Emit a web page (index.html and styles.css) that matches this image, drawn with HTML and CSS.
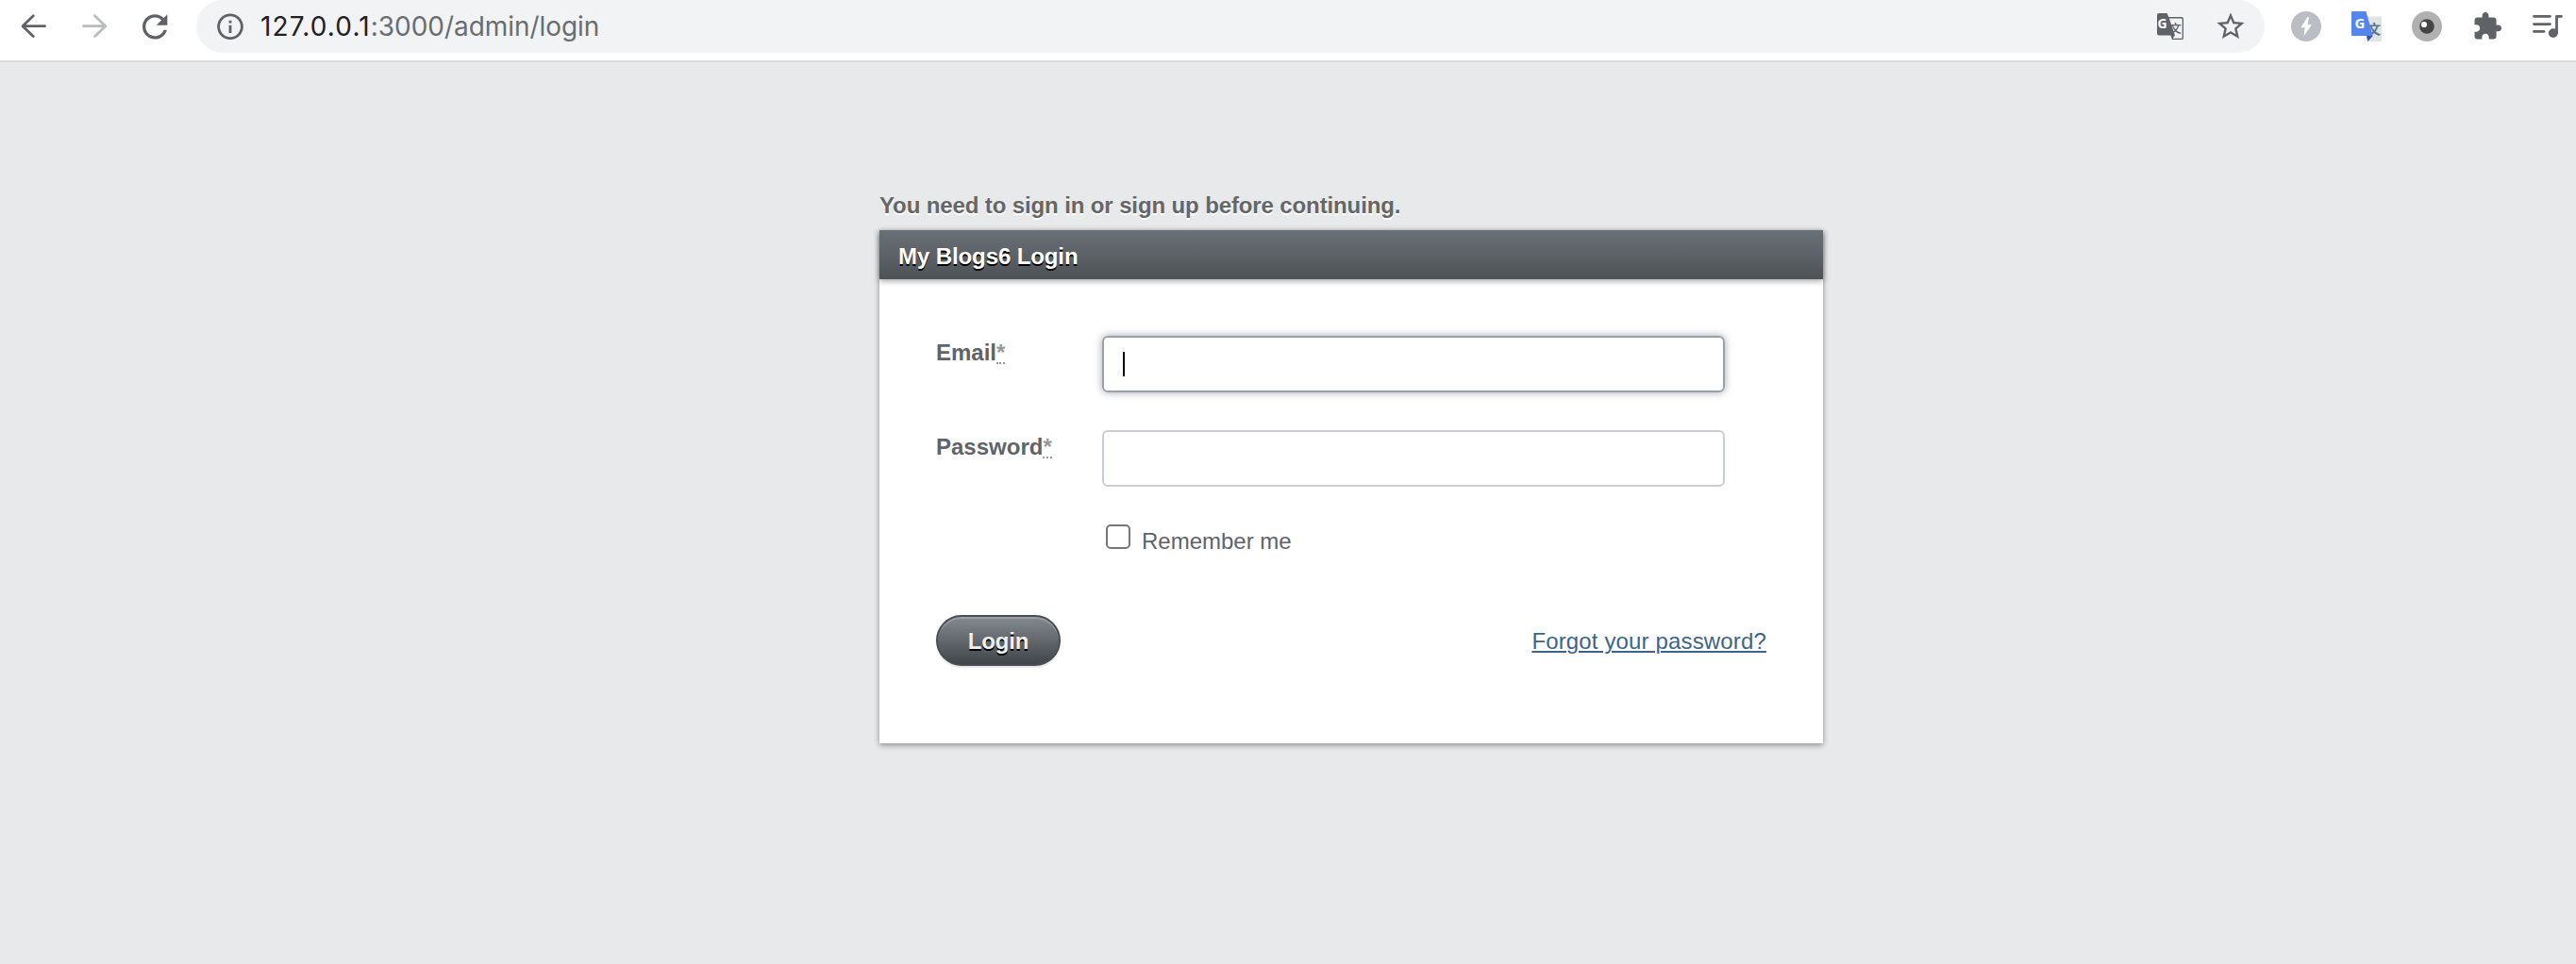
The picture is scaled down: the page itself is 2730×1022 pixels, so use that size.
FILE: index.html
```html
<!DOCTYPE html>
<html lang="en">
<head>
<meta charset="utf-8">
<title>My Blogs6 Login</title>
<link rel="stylesheet" href="styles.css">
</head>
<body>
<header class="toolbar">
  <nav class="nav-buttons">
    <svg class="icon" viewBox="0 0 32 32"><path class="line" d="M27.500 15.700H4M15.300 4.800 4 15.700 15.300 26.600"/></svg>
    <svg class="icon faded" viewBox="0 0 32 32"><path class="line" d="M4.500 15.700h23.500M16.500 4.800l11.300 10.900-11.300 10.900"/></svg>
    <svg class="icon" viewBox="2.2 2.1 19.4 19.4"><path d="M17.65 6.35C16.2 4.9 14.21 4 12 4c-4.42 0-7.99 3.58-7.99 8s3.57 8 7.99 8c3.73 0 6.84-2.55 7.73-6h-2.08c-.82 2.33-3.04 4-5.65 4-3.31 0-6-2.69-6-6s2.69-6 6-6c1.66 0 3.14.69 4.22 1.78L13 11h7V4z"/></svg>
  </nav>
  <div class="address">
    <svg class="icon" viewBox="0 0 32 32"><circle class="line" cx="16" cy="16.2" r="12.4"/><path d="M14.6 14.8h2.8V23h-2.8zM14.6 9.8h2.8v2.8h-2.8z"/></svg>
    <span class="url"><span class="host">127.0.0.1</span>:3000/admin/login</span>
    <svg class="icon translate" viewBox="0 0 32 32"><path d="M4 2h8.600l1.700 4H28a2 2 0 0 1 2 2v20a2 2 0 0 1-2 2H18l-1.700-4.600H4a2 2 0 0 1-2-2V4a2 2 0 0 1 2-2z"/><path class="paper" d="M14.900 7.400H27.700a1 1 0 0 1 1 1v19.300a1 1 0 0 1-1 1h-9.100l2.300-3.300z"/><text class="g" x="2.600" y="18.300" font-size="14">G</text><text class="wen" x="15.300" y="23.200" font-size="12.500">文</text></svg>
    <svg class="icon" viewBox="1 1 22 22"><path d="M22 9.240l-7.190-.620L12 2 9.190 8.630 2 9.240l5.460 4.730L5.820 21 12 17.270 18.180 21l-1.630-7.030L22 9.240zM12 15.400l-3.760 2.270 1-4.280-3.320-2.880 4.380-.380L12 6.100l1.710 4.040 4.380.380-3.320 2.880 1 4.280L12 15.400z"/></svg>
  </div>
  <div class="extensions">
    <svg class="icon" viewBox="0 0 32 32"><circle cx="16" cy="16" r="16" fill="#babec4"/><path d="M17.500 6 10.300 17.300h4.400L13.600 26.300l8.200-12h-4.200L18.900 6z" fill="#fff"/></svg>
    <svg class="icon" viewBox="0 0 32 32"><path d="M12 5.500h18.500a1.500 1.500 0 0 1 1.500 1.500v23.500a1.500 1.500 0 0 1-1.500 1.500H17z" fill="#e2e3e5"/><text class="wen-color" x="17" y="23.500" font-size="14">文</text><path d="M16 26h6.800L17.300 32z" fill="#3551c0"/><path d="M1 0h14.500l7.300 26H1a1 1 0 0 1-1-1V1a1 1 0 0 1 1-1z" fill="#5586ed"/><text class="g-color" x="3.400" y="18.300" font-size="15">G</text></svg>
    <svg class="icon" viewBox="0 0 32 32"><circle cx="16" cy="16" r="16" fill="#b0b0b0"/><circle cx="16" cy="16" r="7.800" fill="#454545"/><circle cx="13" cy="14" r="3.100" fill="#fff"/></svg>
    <svg class="icon" viewBox=".15 .25 23.600 23.600"><path d="M20.500 11H19V7c0-1.100-.9-2-2-2h-4V3.500C13 2.120 11.880 1 10.500 1S8 2.120 8 3.500V5H4c-1.100 0-1.990.9-1.990 2v3.800H3.500c1.490 0 2.700 1.210 2.700 2.700s-1.210 2.700-2.700 2.700H2V20c0 1.100.9 2 2 2h3.800v-1.500c0-1.490 1.210-2.700 2.700-2.700 1.490 0 2.700 1.210 2.700 2.700V22H17c1.100 0 2-.9 2-2v-4h1.500c1.380 0 2.500-1.120 2.500-2.500S21.880 11 20.500 11z"/></svg>
    <svg class="icon" viewBox="0 0 32 32"><path class="line" d="M1.500 5.300h17M1.500 13.600h17M1.500 21.400h10.500M25.500 23V5.300H30.500"/><circle cx="21.800" cy="23.100" r="4.900"/></svg>
  </div>
</header>
<main class="page">
  <div class="login-wrap">
    <p class="flash">You need to sign in or sign up before continuing.</p>
    <section class="panel">
      <h2 class="panel-title">My Blogs6 Login</h2>
      <form class="login-form">
        <div class="field">
          <span class="label">Email<abbr class="required">*</abbr></span>
          <div class="input focused"><span class="caret"></span></div>
        </div>
        <div class="field">
          <span class="label">Password<abbr class="required">*</abbr></span>
          <div class="input"></div>
        </div>
        <div class="remember"><span class="checkbox"></span><span class="remember-text">Remember me</span></div>
        <div class="actions">
          <button class="submit" type="button">Login</button>
          <a class="forgot" href="#">Forgot your password?</a>
        </div>
      </form>
    </section>
  </div>
</main>
</body>
</html>
```
FILE: styles.css
```css
* { box-sizing: border-box; }
body {
  margin: 0;
  min-height: 1022px;
  background: #e8e9eb;
  color: #5e6469;
  font: 24px/32px "Liberation Sans", Arial, sans-serif;
}
.toolbar {
  display: flex;
  align-items: flex-start;
  height: 66px;
  padding: 0 14px 0 20px;
  background: #fff;
  border-bottom: 2px solid #d9dbde;
}
.icon { display: block; flex: none; width: 32px; height: 32px; fill: #5f6368; }
.line { fill: none; stroke: #5f6368; stroke-width: 2.8; stroke-linecap: round; stroke-linejoin: round; }
.faded .line { stroke: #babcbe; }
.nav-buttons, .extensions { display: flex; gap: 32px; padding-top: 12px; }
.nav-buttons { margin-right: 28px; }
.address {
  display: flex;
  flex: 1;
  align-items: center;
  height: 56px;
  margin-right: 28px;
  padding: 0 20px;
  background: #f1f3f4;
  border-radius: 28px;
}
.url {
  flex: 1;
  margin-left: 16px;
  color: #6a6d70;
  font: 28px/56px Inter, sans-serif;
  letter-spacing: -.05px;
}
.host { color: #202124; letter-spacing: 1.15px; }
.translate { margin-right: 32px; }
.paper { fill: #f1f3f4; }
.g, .g-color { fill: #fff; font-family: "Open Sans", sans-serif; font-weight: 700; }
.wen { fill: #5f6368; font-family: "Noto Sans CJK SC", sans-serif; font-weight: 500; }
.wen-color { fill: #567789; font-family: "Noto Sans CJK SC", sans-serif; font-weight: 700; }
.page { display: flex; justify-content: center; padding: 136px 0 0 134px; }
.login-wrap { width: 1000px; }
.flash {
  margin: 0 0 10px;
  color: #666;
  font-weight: 700;
  letter-spacing: -.12px;
  text-shadow: 0 2px 0 #fff;
}
.panel { height: 544px; background: #fff; box-shadow: 0 2px 6px rgba(0, 0, 0, .4); }
.panel-title {
  height: 52px;
  margin: 0;
  padding: 0 20px;
  background: linear-gradient(#6a7176, #4d5256);
  box-shadow: 0 2px 6px rgba(0, 0, 0, .37);
  color: #fff;
  font-size: 24px;
  letter-spacing: -.1px;
  line-height: 56px;
  text-shadow: 0 2px 0 #000;
}
.login-form { padding: 60px 60px 0; }
.field { display: flex; height: 60px; margin-bottom: 40px; }
.label { width: 176px; padding-top: 2px; font-weight: 700; }
.required {
  display: inline-block;
  height: 28px;
  border-bottom: 2px dotted #999;
  color: #999;
  font-weight: 700;
  line-height: 32px;
  text-decoration: none;
}
.input {
  display: flex;
  align-items: center;
  width: 660px;
  padding-left: 20px;
  border: 2px solid #c9ced4;
  border-radius: 6px;
}
.focused { border-color: #9aa1aa; box-shadow: 0 0 8px #9fa5b2; }
.caret { width: 2px; height: 26px; background: #000; }
.remember { display: flex; gap: 12px; height: 32px; padding-left: 180px; }
.remember-text { padding-top: 2px; }
.checkbox { width: 26px; height: 26px; border: 2px solid #767676; border-radius: 5px; }
.actions { display: flex; align-items: center; justify-content: space-between; margin-top: 64px; }
.submit {
  width: 132px;
  height: 54px;
  padding: 1px 0 0;
  border: 2px solid #484e53;
  border-radius: 27px;
  background: linear-gradient(#838a90, #414549);
  box-shadow: 0 2px 2px rgba(0, 0, 0, .1), inset 0 2px 0 rgba(255, 255, 255, .2);
  color: #efefef;
  font: 700 24px/50px "Liberation Sans", Arial, sans-serif;
  letter-spacing: -.2px;
  text-shadow: 0 2px 0 #000;
}
.forgot { padding-top: 2px; color: #3d658b; letter-spacing: .15px; text-underline-offset: 2px; text-decoration-thickness: 2px; }
```
